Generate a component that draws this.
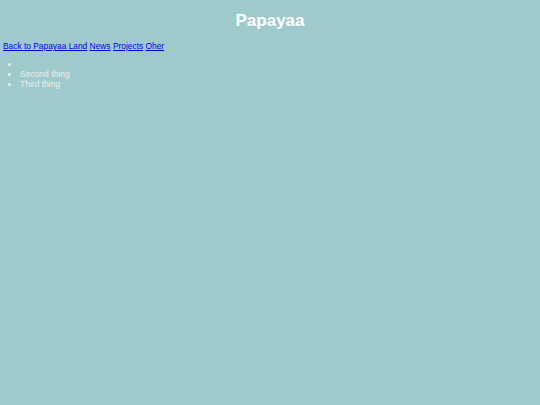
export default function App() {
  return (
    <div className="min-h-[405px] w-full bg-[#9fcacb] px-[3px] pt-[11px] font-['Liberation_Sans',Arial,sans-serif]">
      <h1 className="text-center text-[17px] font-bold leading-[20px] text-white">Papayaa</h1>
      <p className="mt-[10px] text-[8.4px] leading-[10px]">
        <a href="#" className="text-[#0000ee] underline">Back to Papayaa Land</a>{" "}
        <a href="#" className="text-[#0000ee] underline">News</a>{" "}
        <a href="#" className="text-[#0000ee] underline">Projects</a>{" "}
        <a href="#" className="text-[#0000ee] underline">Oher</a>
      </p>
      <ul className="mt-[8px] list-disc pl-[17px] text-[8.5px] leading-[10px] text-[#eeeeee]">
        <li>&nbsp;</li>
        <li>Second thing</li>
        <li>Third thing</li>
      </ul>
    </div>
  );
}
